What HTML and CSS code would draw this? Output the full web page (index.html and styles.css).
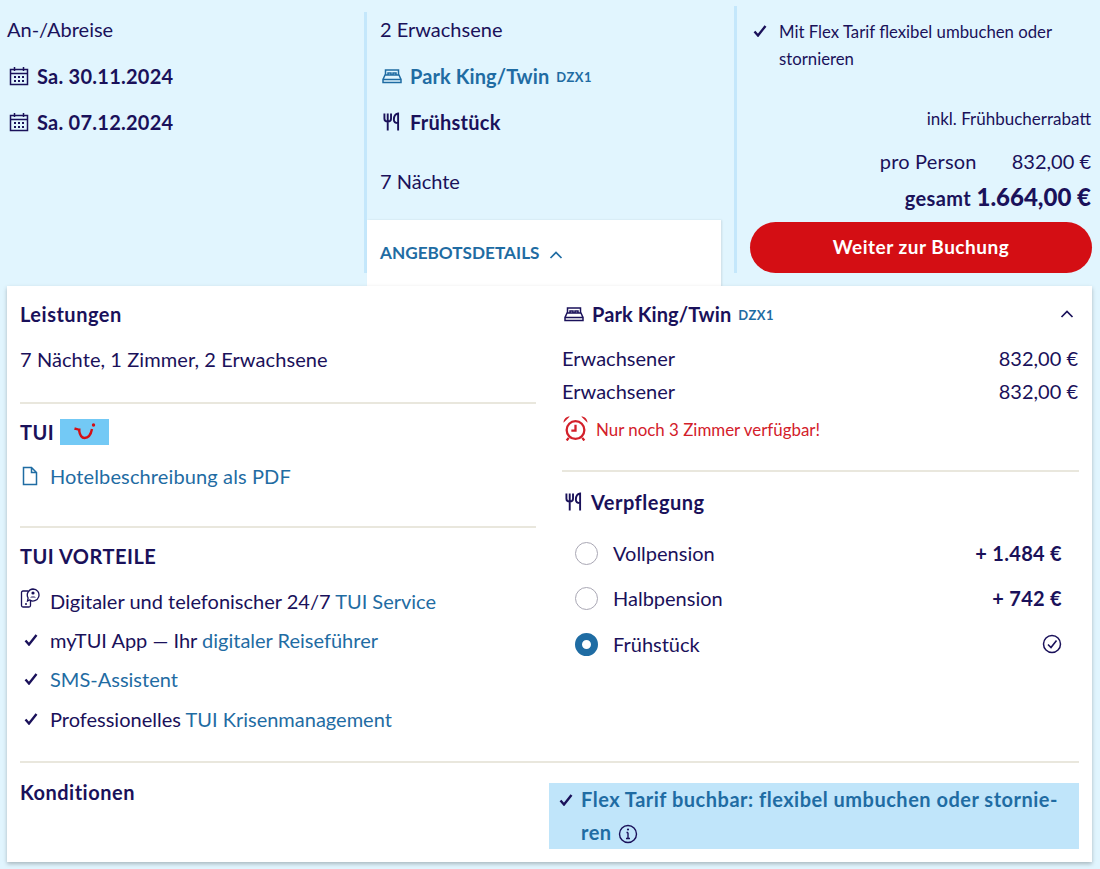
FILE: index.html
```html
<!DOCTYPE html>
<html>

<head>
    <title>Angebotsdetails</title>
    <link rel="stylesheet" href="styles.css">
</head>

<body>

    <svg class="sprites" width="0" height="0">
        <symbol id="i-cal" viewBox="0 0 20 20">
            <path d="M1.5 3.5h17v15h-17zM1.5 7.5h17M5.5 1v4M14.5 1v4" fill="none" stroke="currentColor" stroke-width="1.5"/>
            <path d="M5 10h2v2H5zM9 10h2v2H9zM13 10h2v2h-2zM5 14h2v2H5zM9 14h2v2H9zM13 14h2v2h-2z" fill="currentColor"/>
        </symbol>
        <symbol id="i-bed" viewBox="0 0 20 16">
            <path d="M3.5 7V2h13v5M1 11.5 3 7h14l2 4.5M1 11.5h18v3H1zM6 7V5h3v2M11 7V5h3v2" fill="none" stroke="currentColor" stroke-width="1.5"/>
        </symbol>
        <symbol id="i-food" viewBox="0 0 18 20">
            <path d="M1.5 1v5.500c0 2 1.500 3 3.500 3s3.500-1 3.500-3V1M5 1v18M16 19V1c-3 .5-4.500 3-4.500 6.500 0 2.500 1.500 3.500 4.500 3.500" fill="none" stroke="currentColor" stroke-width="2"/>
        </symbol>
        <symbol id="i-check" viewBox="0 0 14 12">
            <path d="M1.500 6.500 5 10.500 12.500 1" fill="none" stroke="currentColor" stroke-width="2.400"/>
        </symbol>
        <symbol id="i-up" viewBox="0 0 14 8">
            <path d="M1.500 7 7 1.500 12.500 7" fill="none" stroke="currentColor" stroke-width="1.700"/>
        </symbol>
    </svg>

    <div class="summary">
        <div class="col col-dates">
            <div class="row row-top">An-/Abreise</div>
            <div class="row strong"><svg class="ico-cal"><use href="#i-cal"/></svg>Sa. 30.11.2024</div>
            <div class="row strong"><svg class="ico-cal"><use href="#i-cal"/></svg>Sa. 07.12.2024</div>
        </div>

        <div class="col col-room">
            <div class="divider"></div>
            <div class="row row-top">2 Erwachsene</div>
            <div class="row strong link"><svg class="ico-bed"><use href="#i-bed"/></svg>Park King/Twin <span class="code">DZX1</span></div>
            <div class="row strong"><svg class="ico-food"><use href="#i-food"/></svg>Frühstück</div>
            <div class="row nights">7 Nächte</div>
            <div class="tab">ANGEBOTSDETAILS <svg class="ico-up"><use href="#i-up"/></svg></div>
        </div>

        <div class="col col-price">
            <div class="divider"></div>
            <div class="flex-note">
                <svg class="ico-check"><use href="#i-check"/></svg>
                <p>Mit Flex Tarif flexibel umbuchen oder stornieren</p>
            </div>
            <div class="discount">inkl. Frühbucherrabatt</div>
            <div class="per-person"><span>pro Person</span><span>832,00 €</span></div>
            <div class="total">gesamt <b>1.664,00 €</b></div>
            <button class="book">Weiter zur Buchung</button>
        </div>
    </div>

    <div class="panel">
        <div class="panel-main">
            <div class="left">
                <div class="block block-first">
                    <h3>Leistungen</h3>
                    <div class="line">7 Nächte, 1 Zimmer, 2 Erwachsene</div>
                </div>
                <div class="block block-hotel">
                    <h3 class="brand">TUI
                        <span class="logo">
                            <svg width="24" height="20" viewBox="0 0 24 20">
                                <path d="M1.500 6.500c3 .8 4.500 1.300 6 1.300M6 8c.8 5 3 8 5.500 8 4 0 6.500-4 7.500-9" fill="none" stroke="#d40e14" stroke-width="2.400"/>
                                <circle cx="20.500" cy="3" r="1.700" fill="#d40e14"/>
                            </svg>
                        </span>
                    </h3>
                    <div class="line link icon-line">
                        <svg class="ico-doc" viewBox="0 0 16 20">
                            <path d="M1.500 1.500h8l5 5v12h-13zM9.500 1.500v5h5" fill="none" stroke="currentColor" stroke-width="1.500"/>
                        </svg>
                        Hotelbeschreibung als PDF
                    </div>
                </div>
                <div class="block block-last">
                    <h3>TUI VORTEILE</h3>
                    <ul class="perks">
                        <li>
                            <svg class="ico-service" viewBox="0 0 20 20">
                                <path d="M8 3H3a1.500 1.500 0 0 0-1.500 1.500v13A1.500 1.500 0 0 0 3 19h6a1.500 1.500 0 0 0 1.500-1.500V13" fill="none" stroke="currentColor" stroke-width="1.300"/>
                                <path d="M13 1a6 6 0 1 1-3.500 10.900L7.500 13l.6-3A6 6 0 0 1 13 1z" fill="none" stroke="currentColor" stroke-width="1.300"/>
                                <circle cx="13" cy="5" r="1.600" fill="currentColor"/>
                                <path d="M10 9.500c.5-1.500 5.500-1.500 6 0z" fill="currentColor"/>
                                <circle cx="6" cy="16" r="1" fill="currentColor"/>
                            </svg>
                            <span>Digitaler und telefonischer 24/7 <a>TUI Service</a></span>
                        </li>
                        <li><svg class="ico-check"><use href="#i-check"/></svg><span>myTUI App — Ihr <a>digitaler Reiseführer</a></span></li>
                        <li><svg class="ico-check"><use href="#i-check"/></svg><span><a>SMS-Assistent</a></span></li>
                        <li><svg class="ico-check"><use href="#i-check"/></svg><span>Professionelles <a>TUI Krisenmanagement</a></span></li>
                    </ul>
                </div>
            </div>

            <div class="right">
                <div class="block block-first block-room">
                    <div class="room-head">
                        <h3><svg class="ico-bed"><use href="#i-bed"/></svg>Park King/Twin <span class="code">DZX1</span></h3>
                        <svg class="ico-up"><use href="#i-up"/></svg>
                    </div>
                    <div class="price-line first"><span>Erwachsener</span><span>832,00 €</span></div>
                    <div class="price-line"><span>Erwachsener</span><span>832,00 €</span></div>
                    <div class="alert">
                        <svg class="ico-alarm" viewBox="0 0 24 24">
                            <circle cx="12" cy="13.500" r="8.500" fill="none" stroke="currentColor" stroke-width="2.200"/>
                            <path d="M12 8.500v5.500H8M5.500 21 3.500 23.500M18.500 21l2 2.500" fill="none" stroke="currentColor" stroke-width="2.200"/>
                            <path d="M.5 6.500C.5 3 3 .5 6.500.5zM23.500 6.500C23.500 3 21 .5 17.500.5z" fill="currentColor"/>
                        </svg>
                        Nur noch 3 Zimmer verfügbar!
                    </div>
                </div>
                <div class="block block-board">
                    <h3><svg class="ico-food"><use href="#i-food"/></svg>Verpflegung</h3>
                    <div class="board">
                        <span class="radio"></span><span class="board-name">Vollpension</span><b>+ 1.484 €</b>
                    </div>
                    <div class="board">
                        <span class="radio"></span><span class="board-name">Halbpension</span><b>+ 742 €</b>
                    </div>
                    <div class="board">
                        <span class="radio radio-on"></span><span class="board-name">Frühstück</span>
                        <svg class="ico-ok" viewBox="0 0 20 20">
                            <circle cx="10" cy="10" r="8.500" fill="none" stroke="currentColor" stroke-width="1.500"/>
                            <path d="M6 10.500 9 13.500 14.500 6.500" fill="none" stroke="currentColor" stroke-width="1.600"/>
                        </svg>
                    </div>
                </div>
            </div>
        </div>

        <div class="conditions">
            <h3>Konditionen</h3>
            <div class="flex-box">
                <svg class="ico-check"><use href="#i-check"/></svg>
                <p>Flex Tarif buchbar: flexibel umbuchen oder stornie-<br>ren
                    <svg class="ico-info" viewBox="0 0 20 20">
                        <circle cx="10" cy="10" r="8.500" fill="none" stroke="#1a115a" stroke-width="1.400"/>
                        <path d="M10 8.500v6M8 14.500h4M8.500 8.500H10" fill="none" stroke="#1a115a" stroke-width="1.400"/>
                        <circle cx="10" cy="5.500" r="1.100" fill="#1a115a"/>
                    </svg>
                </p>
            </div>
        </div>
    </div>

</body>

</html>
```

FILE: styles.css
```css
* {
    box-sizing: border-box;
}

html,
body {
    margin: 0;
    height: 869px;
    overflow: hidden;
}

body {
    background-color: #e1f5fe;
    color: #1a115a;
    font-family: Lato, "Noto Sans", sans-serif;
    font-size: 20px;
    line-height: 28px;
}

.sprites {
    display: block;
    height: 0;
}

h3 {
    margin: 0;
    font-size: 20px;
    font-weight: 700;
    letter-spacing: 0.5px;
}

p {
    margin: 0;
}

svg {
    flex: none;
}

.link,
a {
    color: #1f6ca3;
}

.summary {
    display: grid;
    grid-template-columns: 364px 370px 1fr;
    height: 286px;
}

.col {
    position: relative;
}

.divider {
    position: absolute;
    left: 0;
    bottom: 13px;
    width: 3px;
    background-color: #c4e7fb;
}

.col-room .divider {
    top: 12px;
}

.col-price .divider {
    top: 6px;
}

.col-dates {
    padding: 7px 0 0 7px;
}

.col-room {
    padding: 7px 0 0 16px;
}

.row {
    display: flex;
    align-items: center;
    height: 46px;
}

.row-top {
    padding-bottom: 2px;
}

.strong {
    font-weight: 700;
    letter-spacing: 0.25px;
}

.link.strong {
    letter-spacing: 0.1px;
}

.code {
    margin: 3px 0 0 7px;
    font-size: 13px;
    font-weight: 700;
    line-height: 1;
    letter-spacing: 0.5px;
    color: #1f6ca3;
}

.ico-cal {
    width: 20px;
    height: 20px;
    margin: 0 8px 0 2px;
}

.ico-bed {
    width: 20px;
    height: 16px;
    margin-right: 8px;
}

.col-room .ico-bed {
    margin-left: 2px;
}

.ico-food {
    width: 17px;
    height: 20px;
    margin: 0 10px 0 3px;
}

.ico-up {
    width: 14px;
    height: 8px;
}

.ico-check {
    width: 14px;
    height: 12px;
}

.nights {
    margin-top: 13px;
}

.tab {
    position: absolute;
    left: 3px;
    top: 220px;
    width: 354px;
    height: 67px;
    padding: 19px 0 0 13px;
    background-color: #fff;
    color: #1f6ca3;
    font-size: 17.2px;
    font-weight: 700;
    box-shadow: 1px 0 2px rgba(0, 0, 0, 0.1);
}

.tab .ico-up {
    margin-left: 5px;
}

.col-price {
    padding: 18px 9px 0 16px;
}

.flex-note {
    display: flex;
    font-size: 16.75px;
    line-height: 27px;
    padding-left: 3px;
}

.flex-note .ico-check {
    margin-top: 7px;
    margin-right: 12px;
}

.discount {
    margin-top: 33px;
    text-align: right;
    font-size: 17px;
}

.per-person {
    display: flex;
    justify-content: flex-end;
    gap: 35px;
    margin-top: 14px;
}

.per-person span:first-child {
    letter-spacing: 0.2px;
}

.total {
    margin-top: 8px;
    text-align: right;
    font-weight: 700;
    letter-spacing: 0.4px;
}

.total b {
    font-size: 24px;
    letter-spacing: 0;
}

.book {
    display: block;
    width: calc(100% + 1px);
    height: 51px;
    margin-top: 10px;
    padding: 0 0 2px;
    border: none;
    border-radius: 26px;
    background-color: #d40e14;
    color: #fff;
    font-family: Lato, "Noto Sans", sans-serif;
    font-size: 19px;
    font-weight: 700;
    letter-spacing: 0.5px;
}

.panel {
    margin: 0 8px 0 7px;
    height: 576px;
    padding: 14px 13px 0;
    background-color: #fff;
    box-shadow: 0 2px 4px rgba(0, 0, 0, 0.25);
    position: relative;
}

.panel-main {
    display: grid;
    grid-template-columns: 516px 517px;
    gap: 26px;
    height: 463px;
    border-bottom: 2px solid #e9e7dd;
}

.block {
    padding: 14px 0 36px;
    border-bottom: 2px solid #e9e7dd;
}

.block-first {
    padding: 0 0 29px;
}

.block-room {
    padding-bottom: 26px;
}

.block-last,
.block-board {
    padding-bottom: 0;
    border-bottom: none;
}

.line {
    margin-top: 17px;
    letter-spacing: 0.08px;
}

.icon-line {
    display: flex;
    align-items: center;
    gap: 12px;
    margin-top: 16px;
    letter-spacing: 0.12px;
}

.ico-doc {
    width: 18px;
    height: 20px;
    padding-left: 2px;
}

.brand {
    display: flex;
    align-items: center;
    gap: 6px;
}

.logo {
    display: flex;
    justify-content: center;
    align-items: center;
    width: 49px;
    height: 26px;
    background-color: #73c9f5;
}

.perks {
    list-style: none;
    margin: 17px 0 0;
    padding: 0;
}

.perks li {
    display: flex;
    align-items: center;
    height: 28px;
    margin-bottom: 11px;
}

.perks li:nth-child(3) {
    margin-bottom: 12px;
}

.perks .ico-check {
    margin: 0 12px 0 4px;
}

.ico-service {
    width: 20px;
    height: 20px;
    margin: -6px 10px 0 0;
}

.room-head {
    display: flex;
    justify-content: space-between;
    align-items: center;
    padding: 0 5px 0 2px;
}

.room-head h3 {
    display: flex;
    align-items: center;
    letter-spacing: 0.1px;
}

.price-line {
    display: flex;
    justify-content: space-between;
    height: 33px;
    padding-right: 1px;
    line-height: 33px;
}

.price-line.first {
    margin-top: 14px;
}

.alert {
    display: flex;
    align-items: center;
    gap: 8px;
    margin-top: 8px;
    color: #d3202a;
    font-size: 16.9px;
}

.ico-alarm {
    width: 25px;
    height: 25px;
    margin: -3px 0 0 1px;
}

.block-board {
    padding-top: 16px;
}

.block-board h3 {
    display: flex;
    align-items: center;
}

.block-board .ico-food {
    margin: 0 9px 0 3px;
}

.board {
    display: flex;
    align-items: center;
    height: 28px;
    margin: 17px 17px 0 13px;
}

.board:last-child {
    margin-top: 18px;
}

.board b {
    letter-spacing: 0.3px;
}

.block-board h3 + .board {
    margin-top: 23px;
}

.board-name {
    flex: 1;
    margin-left: 15px;
}

.radio {
    width: 23px;
    height: 23px;
    border: 1px solid #a9a7b4;
    border-radius: 50%;
}

.radio-on {
    border: 7px solid #1f6ca3;
    background-color: #fff;
}

.ico-ok {
    width: 20px;
    height: 20px;
}

.conditions {
    display: grid;
    grid-template-columns: 529px 530px;
    padding-top: 20px;
}

.conditions h3 {
    margin-top: -5px;
}

.flex-box {
    display: flex;
    align-items: flex-start;
    height: 66px;
    padding: 0 8px 0 10px;
    background-color: #c0e5fa;
    color: #1f6ca3;
    font-weight: 700;
    line-height: 33px;
    letter-spacing: 0.5px;
}

.flex-box .ico-check {
    margin: 11px 8px 0 0;
    color: #1a115a;
}

.ico-info {
    width: 20px;
    height: 20px;
    margin-left: 1px;
    vertical-align: -4px;
}
```
